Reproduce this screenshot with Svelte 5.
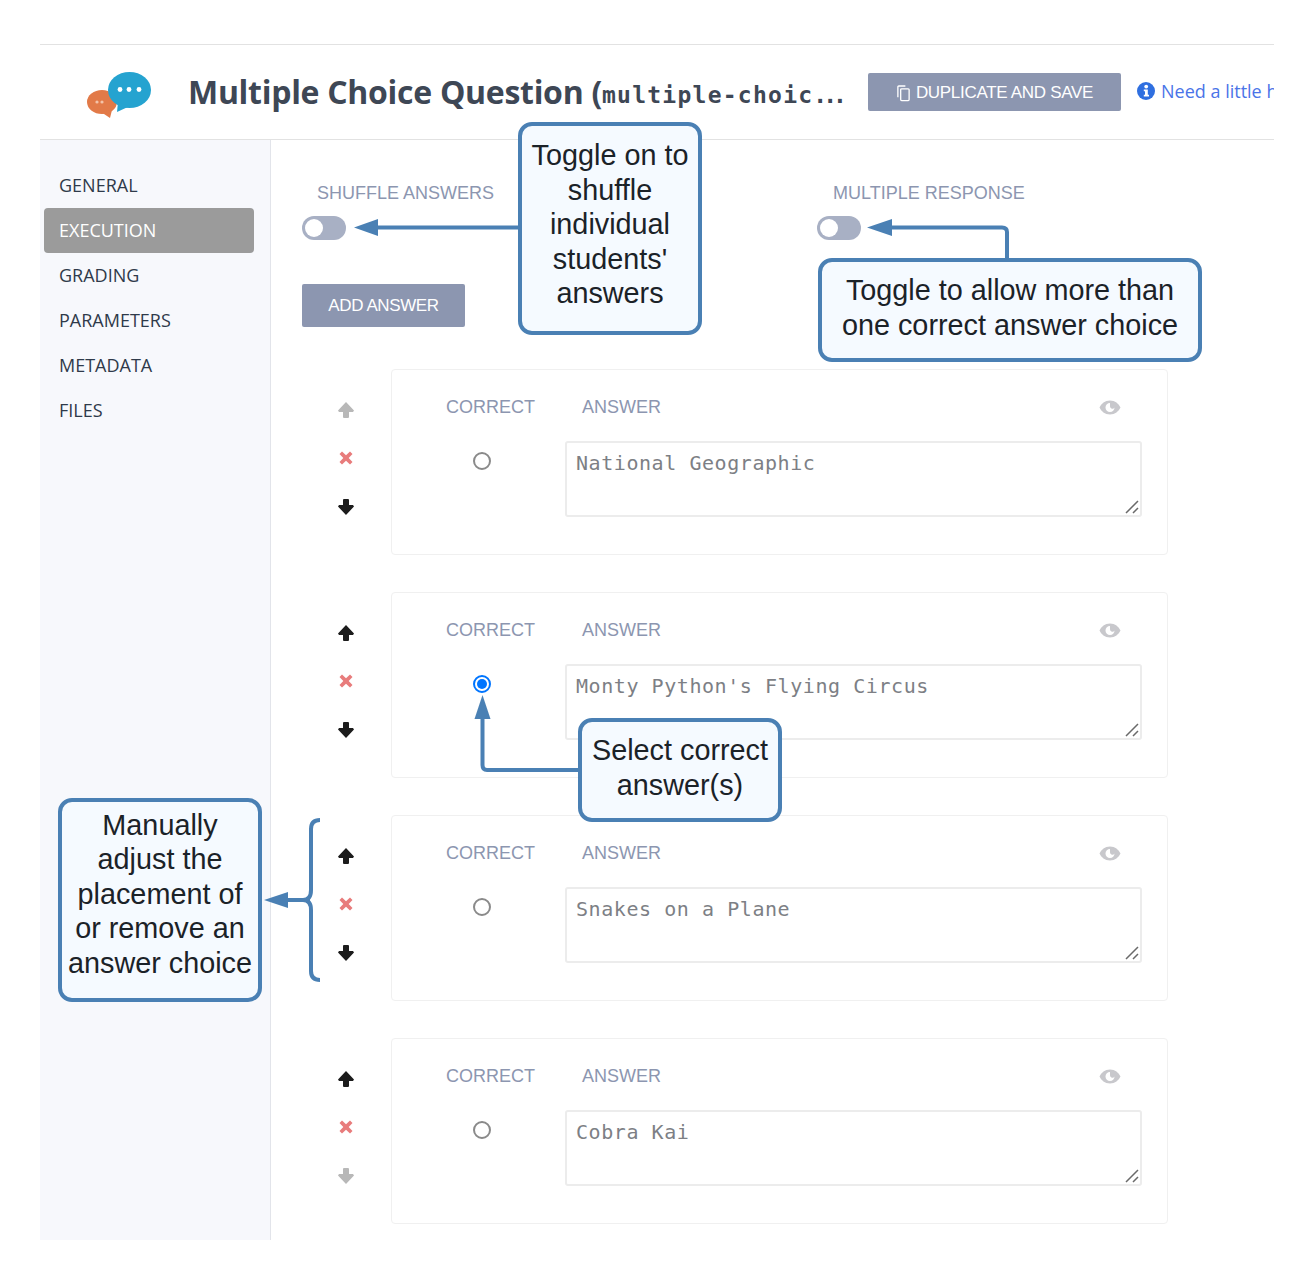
<script>
  const sections = ['GENERAL', 'EXECUTION', 'GRADING', 'PARAMETERS', 'METADATA', 'FILES'];

  const answers = [
    { text: 'National Geographic', correct: false, firstRow: true },
    { text: "Monty Python's Flying Circus", correct: true },
    { text: 'Snakes on a Plane', correct: false },
    { text: 'Cobra Kai', correct: false, lastRow: true }
  ];
</script>

<div class="screen">
  <div class="page">
    <header class="top">
      <svg class="logo" width="66" height="48" viewBox="86 71 66 48" aria-hidden="true">
        <ellipse cx="102" cy="102" rx="15" ry="12" fill="#e27a48" />
        <path d="M101 112 L110 118 L112 110 Z" fill="#e27a48" />
        <circle cx="97" cy="102" r="1.6" fill="#f3c3a8" />
        <circle cx="102" cy="102" r="1.6" fill="#f3c3a8" />
        <ellipse cx="129.5" cy="90" rx="21.5" ry="18" fill="#25a3d0" />
        <path d="M118 102 L117 112 L130 106 Z" fill="#25a3d0" />
        <circle cx="120" cy="89.500" r="2.400" fill="#fff" />
        <circle cx="129" cy="89.500" r="2.400" fill="#fff" />
        <circle cx="139" cy="89.500" r="2.400" fill="#fff" />
      </svg>
      <h1 class="title">Multiple Choice Question <span class="paren">(</span><span class="slug">multiple-choic<span class="dots">...</span></span></h1>
      <button class="btn dup">
        <svg width="15" height="17" viewBox="0 0 16 18" fill="none" stroke="currentColor" stroke-width="1.400" aria-hidden="true">
          <path d="M2 13 V2 a1 1 0 0 1 1-1 h7" />
          <rect x="5" y="4" width="9" height="12.500" rx="1" />
        </svg>
        DUPLICATE AND SAVE
      </button>
      <div class="help">
        <svg width="18" height="18" viewBox="0 0 18 18" aria-hidden="true">
          <circle cx="9" cy="9" r="9" fill="#2f6fe0" />
          <circle cx="9.200" cy="4.600" r="1.900" fill="#fff" />
          <path d="M6.800 7.500 H10.800 V12.800 H12 V14.600 H6.800 V12.800 H8 V9.300 H6.800 Z" fill="#fff" />
        </svg>
        <span>Need a little help?</span>
      </div>
    </header>

    <div class="body">
      <nav class="side">
        {#each sections as section}
          <div class="side-item" class:active={section === 'EXECUTION'}>{section}</div>
        {/each}
      </nav>

      <main class="main">
        <div class="toggles">
          <div class="toggle-field">
            <div class="field-label">SHUFFLE ANSWERS</div>
            <div class="toggle"><span class="knob"></span></div>
          </div>
          <div class="toggle-field">
            <div class="field-label">MULTIPLE RESPONSE</div>
            <div class="toggle"><span class="knob"></span></div>
          </div>
        </div>

        <button class="btn add">ADD ANSWER</button>

        <div class="answers">
          {#each answers as answer}
            <div class="row">
              <div class="controls">
                <svg class:muted={answer.firstRow} class="arrow" width="18" height="18" viewBox="0 0 18 18" aria-hidden="true">
                  <path d="M9 1 L17 9.500 L16 11 L12 11 V16 Q12 17 11 17 H7 Q6 17 6 16 V11 H2 L1 9.500 Z" />
                </svg>
                <svg class="remove" width="18" height="18" viewBox="0 0 18 18" aria-hidden="true">
                  <path d="M5 2.500 L9 6.300 L13 2.500 L15.500 5 L11.700 9 L15.500 13 L13 15.500 L9 11.700 L5 15.500 L2.500 13 L6.300 9 L2.500 5 Z" />
                </svg>
                <svg class:muted={answer.lastRow} class="arrow" width="18" height="18" viewBox="0 0 18 18" aria-hidden="true">
                  <path d="M9 17 L17 8.500 L16 7 L12 7 V2 Q12 1 11 1 H7 Q6 1 6 2 V7 H2 L1 8.500 Z" />
                </svg>
              </div>
              <div class="card">
                <div class="card-head">
                  <span class="label-correct">CORRECT</span>
                  <span class="label-answer">ANSWER</span>
                  <svg class="eye" width="22" height="15" viewBox="0 0 22 15" aria-hidden="true">
                    <path fill-rule="evenodd" d="M11 0.500 C16 0.500 19.800 3.800 21.500 7.500 C19.800 11.200 16 14.500 11 14.500 C6 14.500 2.200 11.200 0.500 7.500 C2.200 3.800 6 0.500 11 0.500 Z M11 3 A4.500 4.500 0 1 0 15.500 7.500 A2.500 2.500 0 0 1 11 5.500 Z" />
                  </svg>
                </div>
                <div class="card-body">
                  <input class="radio" type="radio" checked={answer.correct} />
                  <div class="text-wrap">
                    <textarea class="answer-text" value={answer.text}></textarea>
                    <svg class="grip" width="16" height="16" viewBox="0 0 16 16" fill="none" stroke="#6a6a6a" stroke-width="1.500" aria-hidden="true">
                      <path d="M2 14 L14 2 M9 14 L14 9" />
                    </svg>
                  </div>
                </div>
              </div>
            </div>
          {/each}
        </div>
      </main>
    </div>
  </div>

  <svg class="pointers" width="1314" height="1280" viewBox="0 0 1314 1280" aria-hidden="true">
    <g class="line">
      <path d="M520 227.500 H370" />
      <path d="M1007 260 V232 Q1007 227.500 1002 227.500 H890" />
      <path d="M580 770 H487 Q482.500 770 482.500 765 V716" />
      <path d="M320 820 Q311 820 311 829 V890 Q311 900 303 900 Q311 900 311 910 V971 Q311 980 320 980" />
      <path d="M310 900 H285" />
    </g>
    <g class="head">
      <path d="M354 227.500 L378 219 V236 Z" />
      <path d="M867 227.500 L892 219 V236 Z" />
      <path d="M482.500 695 L474.500 719 H490.500 Z" />
      <path d="M264 900 L288 892 V908 Z" />
    </g>
  </svg>

  <div class="callout c-shuffle">Toggle on to<br />shuffle<br />individual<br />students'<br />answers</div>
  <div class="callout c-multi">Toggle to allow more than<br />one correct answer choice</div>
  <div class="callout c-select">Select correct<br />answer(s)</div>
  <div class="callout c-manual">Manually<br />adjust the<br />placement of<br />or remove an<br />answer choice</div>
</div>

<style>
  :global(body) {
    background: #fff;
  }

  .screen {
    position: relative;
    width: 1314px;
    height: 1280px;
    padding: 44px 40px 40px;
    box-sizing: border-box;
    font-family: "Open Sans", sans-serif;
    overflow: hidden;
  }

  .page {
    height: 100%;
    display: flex;
    flex-direction: column;
    overflow: hidden;
  }

  .top {
    height: 96px;
    box-sizing: border-box;
    flex: none;
    display: flex;
    align-items: center;
    border-top: 1px solid #e2e2e2;
    border-bottom: 1px solid #e2e2e2;
    white-space: nowrap;
  }

  .logo {
    margin-left: 46px;
    margin-right: 36px;
    margin-top: 6px;
    flex: none;
  }

  .title {
    width: 680px;
    flex: none;
    margin: -2px 0 0;
    font-size: 32px;
    font-weight: 700;
    letter-spacing: -0.290px;
    color: #3e4755;
  }

  .slug {
    font-family: "DejaVu Sans Mono", monospace;
    font-size: 23px;
    font-weight: 700;
    letter-spacing: 1.250px;
    vertical-align: 1.500px;
  }

  .dots {
    letter-spacing: -4px;
  }

  .btn {
    border: none;
    border-radius: 2px;
    background: #8c96b0;
    color: #fff;
    font-family: "Liberation Sans", sans-serif;
    font-size: 17px;
    letter-spacing: -0.400px;
    flex: none;
  }

  .dup {
    width: 253px;
    height: 38px;
    padding-top: 3px;
    display: flex;
    align-items: center;
    justify-content: center;
    gap: 5px;
    letter-spacing: -0.300px;
  }

  .help {
    margin-left: 16px;
    display: flex;
    align-items: center;
    gap: 6px;
    color: #4a74e8;
    font-size: 18px;
    margin-top: -3px;
    flex: none;
  }

  .body {
    flex: 1;
    display: flex;
    min-height: 0;
  }

  .side {
    width: 231px;
    flex: none;
    box-sizing: border-box;
    padding: 23px 16px 0 4px;
    background: #f7f8fc;
    border-right: 1px solid #e2e4ea;
  }

  .side-item {
    height: 45px;
    box-sizing: border-box;
    padding: 0 0 2px 15px;
    display: flex;
    align-items: center;
    border-radius: 4px;
    font-size: 18px;
    color: #2f3a4a;
  }

  .side-item.active {
    background: #9b9b9b;
    color: #fff;
  }

  .main {
    flex: 1;
    padding: 42px 0 0 31px;
  }

  .toggles {
    display: flex;
  }

  .toggle-field {
    width: 515px;
  }

  .field-label {
    margin-left: 15px;
    margin-bottom: 12px;
    height: 22px;
    line-height: 22px;
    font-family: "Liberation Sans", sans-serif;
    font-size: 18px;
    color: #8c96b0;
  }

  .toggle-field + .toggle-field .field-label {
    margin-left: 16px;
  }

  .toggle {
    width: 44px;
    height: 24px;
    box-sizing: border-box;
    padding: 3px;
    border-radius: 12px;
    background: #a8b0c4;
  }

  .knob {
    display: block;
    width: 18px;
    height: 18px;
    border-radius: 50%;
    background: #fff;
  }

  .add {
    display: block;
    margin-top: 44px;
    width: 163px;
    height: 43px;
  }

  .answers {
    margin-top: 42px;
    display: flex;
    flex-direction: column;
    gap: 37px;
  }

  .row {
    display: flex;
  }

  .controls {
    width: 89px;
    flex: none;
    box-sizing: border-box;
    padding: 32px 0 0 35px;
    display: flex;
    flex-direction: column;
    gap: 30px;
  }

  .arrow {
    fill: #1c1c1c;
  }

  .arrow.muted {
    fill: #b8b8b8;
  }

  .remove {
    fill: #e87c7c;
    margin-bottom: 1px;
  }

  .card {
    width: 777px;
    height: 186px;
    box-sizing: border-box;
    padding: 26px 25px 0 0;
    border: 1px solid #f0f0f0;
    border-radius: 4px;
  }

  .card-head {
    height: 22px;
    display: flex;
    align-items: center;
    font-family: "Liberation Sans", sans-serif;
    font-size: 18px;
    color: #8c96b0;
  }

  .label-correct {
    margin-left: 54px;
    width: 136px;
  }

  .eye {
    margin-left: auto;
    margin-right: 21px;
    fill: #c8c8cc;
  }

  .label-answer {
    flex: none;
  }

  .card-body {
    margin-top: 23px;
    display: flex;
    align-items: flex-start;
  }

  .radio {
    appearance: none;
    margin: 11px 0 0 81px;
    width: 18px;
    height: 18px;
    box-sizing: border-box;
    border: 2px solid #8a8a8a;
    border-radius: 50%;
    background: #fff;
    flex: none;
  }

  .radio:checked {
    border-color: #0075ff;
    padding: 2px;
    background: #0075ff content-box;
  }

  .text-wrap {
    position: relative;
    margin-left: 74px;
    width: 577px;
    height: 76px;
  }

  .answer-text {
    display: block;
    width: 100%;
    height: 100%;
    box-sizing: border-box;
    padding: 7px 9px;
    border: 2px solid #ececec;
    border-radius: 3px;
    outline: none;
    resize: none;
    font-family: "DejaVu Sans Mono", monospace;
    font-size: 20px;
    line-height: 26px;
    letter-spacing: 0.560px;
    color: #7d7f85;
    background: #fff;
  }

  .grip {
    position: absolute;
    right: 2px;
    bottom: 2px;
  }

  .pointers {
    position: absolute;
    left: 0;
    top: 0;
    pointer-events: none;
  }

  .line {
    fill: none;
    stroke: #4a80b4;
    stroke-width: 4;
  }

  .head {
    fill: #4a80b4;
  }

  .callout {
    position: absolute;
    box-sizing: border-box;
    display: flex;
    align-items: center;
    justify-content: center;
    text-align: center;
    padding-bottom: 8px;
    border: 4px solid #4a80b4;
    border-radius: 14px;
    background: #f5faff;
    font-family: "Liberation Sans", sans-serif;
    font-size: 28.800px;
    line-height: 34.600px;
    color: #1b2228;
    white-space: nowrap;
  }

  .c-shuffle {
    left: 518px;
    top: 122px;
    width: 184px;
    height: 213px;
  }

  .c-multi {
    left: 818px;
    top: 258px;
    width: 384px;
    height: 104px;
    padding-bottom: 5px;
  }

  .c-select {
    left: 578px;
    top: 718px;
    width: 204px;
    height: 104px;
    padding-bottom: 5px;
  }

  .c-manual {
    left: 58px;
    top: 798px;
    width: 204px;
    height: 204px;
    padding-bottom: 12px;
  }
</style>
